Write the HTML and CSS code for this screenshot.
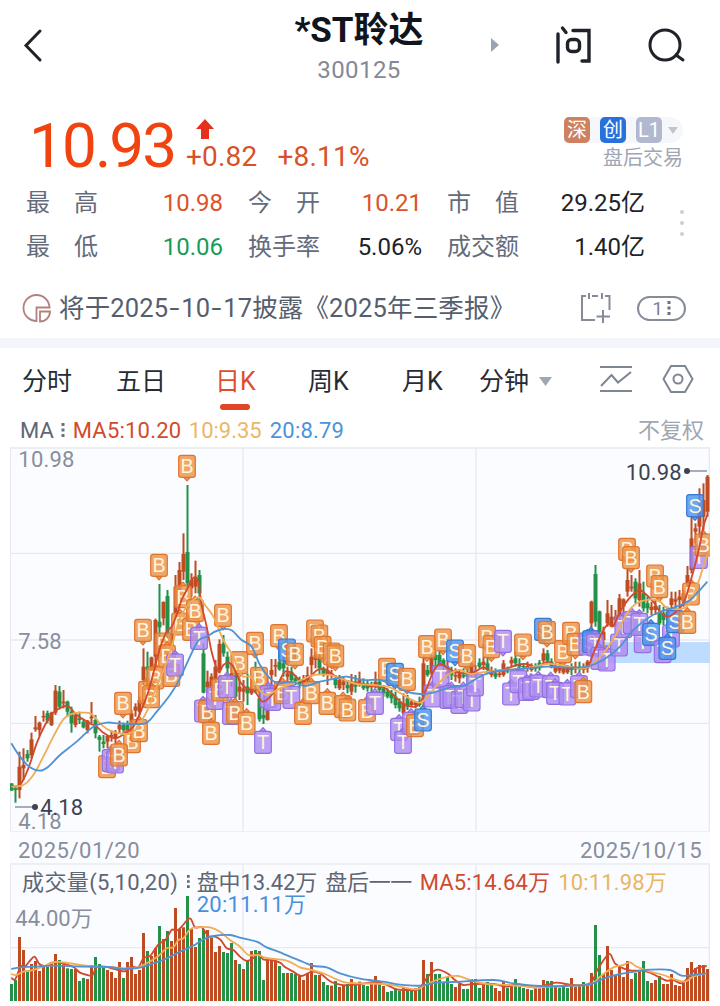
FILE: index.html
```html
<!DOCTYPE html>
<html lang="zh-CN">
<head>
  <meta charset="UTF-8" />
  <meta name="viewport" content="width=device-width, initial-scale=1.0"/>
  <title>*ST聆达 300125</title>
  <link rel="stylesheet" href="styles.css">
</head>
<body>

  <header class="header">
    <svg class="back" width="24" height="36" viewBox="0 0 24 36"><path d="M19 4L5 18.500L19 33"/></svg>
    <div class="title">
      <h1>*ST聆达</h1>
      <span>300125</span>
    </div>
    <svg class="next" width="8" height="14" viewBox="0 0 8 14"><path d="M0 0L8 7L0 14Z"/></svg>
    <svg class="ask" width="38" height="40" viewBox="0 0 38 40">
      <path d="M3 9V37M7.500 3L11 7.500M18 5.500H34V36H27"/>
      <rect x="12.500" y="14.500" width="12" height="12" rx="4"/>
    </svg>
    <svg class="search" width="40" height="40" viewBox="0 0 40 40"><circle cx="17" cy="20" r="15"/><path d="M28 30L35 35"/></svg>
  </header>

  <section class="quote">
    <div class="price">10.93</div>
    <div class="change">
      <svg width="18" height="20" viewBox="0 0 18 20"><path d="M9 0L18 10H13V20H5V10H0Z"/></svg>
      <div><span>+0.82</span><span>+8.11%</span></div>
    </div>
    <div class="tags">
      <div class="tag-row">
        <b class="tag sz">深</b><b class="tag cy">创</b><b class="tag lv">L1</b>
        <svg width="10" height="7" viewBox="0 0 10 7"><path d="M0 0H10L5 7Z"/></svg>
      </div>
      <span>盘后交易</span>
    </div>
  </section>

  <section class="stats">
    <div class="stats-grid">
      <span>最　高</span><b class="up">10.98</b>
      <span>今　开</span><b class="up">10.21</b>
      <span>市　值</span><b>29.25亿</b>
      <span>最　低</span><b class="down">10.06</b>
      <span>换手率</span><b>5.06%</b>
      <span>成交额</span><b>1.40亿</b>
    </div>
    <div class="more"><i></i><i></i><i></i></div>
  </section>

  <section class="notice">
    <svg class="pie" width="30" height="30" viewBox="0 0 30 30">
      <path d="M14.500 28A13 13 0 1 1 27.500 14.500H14.500Z"/>
      <path d="M18 18.500H28A10 10 0 0 1 18 28.500Z"/>
    </svg>
    <p>将于2025<em>-</em>10<em>-</em>17披露《2025年三季报》</p>
    <svg class="calendar" width="30" height="32" viewBox="0 0 30 32">
      <path d="M5 4H1V28H14M11 4H17M24 4H28.500V18M8 1V7M21 1V7M22 18V31M15.500 24.500H29"/>
    </svg>
    <div class="pager"><span>1</span><svg width="4" height="14" viewBox="0 0 4 14"><path d="M2 0V14"/></svg></div>
  </section>

  <nav class="tabs">
    <span>分时</span>
    <span>五日</span>
    <span class="active">日K</span>
    <span>周K</span>
    <span>月K</span>
    <span>分钟 <svg width="13" height="9" viewBox="0 0 13 9"><path d="M0 0H13L6.500 9Z"/></svg></span>
    <svg class="tool" width="34" height="28" viewBox="0 0 34 28"><path d="M1 2H33M1 26H33M2 21L12.500 10L19 17.500L32 7"/></svg>
    <svg class="tool" width="32" height="30" viewBox="0 0 32 30"><path d="M9 2H23L30.500 15L23 28H9L1.500 15Z"/><circle cx="16" cy="15" r="4.500"/></svg>
  </nav>

  <div class="ma-row">
    <span class="ma-name">MA</span>
    <svg class="dots" width="4" height="15" viewBox="0 0 4 15"><path d="M2 0V15"/></svg>
    <span class="ma5">MA5:10.20</span>
    <span class="ma10">10:9.35</span>
    <span class="ma20">20:8.79</span>
    <span class="adjust">不复权</span>
  </div>

  <main class="charts">
    <!-- three chart units to one pixel -->
    <svg id="kline" class="kline" width="700" height="384" viewBox="30 21 2100 1152">
      <path class="grid" d="M30 24H2130M30 340H2130M30 600H2130M30 850H2130M31 21V1173M729 21V1173M1428 21V1173M2128 21V1173"/>
      <rect class="band" x="1790" y="606" width="340" height="63"/>
      <text class="axis" x="55" y="80" textLength="168">10.98</text>
      <text class="axis" x="55" y="626" textLength="130">7.58</text>
      <text class="axis" x="55" y="1166" textLength="130">4.18</text>
    </svg>
    <div class="dates"><span>2025/01/20</span><span>2025/10/15</span></div>
    <svg id="volume" class="volume" width="700" height="137" viewBox="30 105 2100 411">
      <path class="grid" d="M30 353H2130M31 105V513M729 105V513M1428 105V513M2128 105V513"/>
    </svg>
  </main>

  <script src="script.js"></script>
</body>
</html>
```
FILE: styles.css
```css
* {
  box-sizing: border-box;
}

body {
  margin: 0;
  width: 720px;
  height: 1006px;
  overflow: hidden;
  background: #fff;
  color: #1d2027;
  font-family: Roboto, "Noto Sans CJK SC", sans-serif;
}

svg {
  display: block;
  fill: none;
}

h1, p {
  margin: 0;
}

b, em, i {
  font-weight: 400;
  font-style: normal;
}

/* header */
.header {
  display: grid;
  grid-template-columns: 259px 200px 90px 92px 40px;
  align-items: center;
  height: 90px;
}

.header svg {
  stroke: #1f2329;
  stroke-width: 3;
  stroke-linecap: round;
}

.header .back {
  margin-left: 21px;
}

.title {
  display: flex;
  flex-direction: column;
  align-items: center;
  height: 90px;
  padding-top: 8px;
}

.title h1 {
  font-size: 35px;
  line-height: 46px;
  font-weight: 700;
  white-space: nowrap;
  color: #10141c;
}

.title span {
  font-size: 24px;
  line-height: 32px;
  letter-spacing: 0.4px;
  color: #838998;
}

.header .next {
  margin-left: 32px;
  fill: #9ca3b2;
  stroke: none;
}

.header .ask {
  margin-left: 6px;
  stroke-width: 3.4;
}

.header .search {
  margin-left: 7px;
}

/* price block */
.quote {
  display: flex;
  height: 91px;
  padding: 21px 37px 0 29px;
}

.price {
  width: 157px;
  font-size: 62px;
  line-height: 70px;
  letter-spacing: -1.9px;
  color: #f0430f;
}

.change {
  flex: 1;
  padding-top: 8px;
  font-size: 28px;
  color: #d9512a;
}

.change svg {
  margin-left: 10px;
  fill: #e6301c;
}

.change div {
  display: flex;
  gap: 20px;
  line-height: 36px;
  letter-spacing: 0.2px;
}

.tags {
  display: flex;
  flex-direction: column;
  align-items: flex-end;
  padding-top: 6px;
  font-size: 20px;
  color: #a0a6b4;
}

.tags > span {
  line-height: 31px;
}

.tag-row {
  display: flex;
  align-items: center;
  gap: 10px;
  padding-right: 5px;
  border-radius: 13px;
  background: #f6f7fa;
}

.tag-row svg {
  margin-left: -4px;
  fill: #c3c5cb;
}

.tag {
  width: 26px;
  height: 26px;
  border-radius: 5px;
  color: #fff;
  font-size: 20px;
  line-height: 26px;
  text-align: center;
}

.sz { background: #cd8160; }
.cy { background: #2870dc; }
.lv { background: #b3b8d1; }

/* quote figures */
.stats {
  display: flex;
  height: 95px;
  padding-left: 26px;
}

.stats-grid {
  display: grid;
  grid-template-columns: 72px 125px 97px 102px 97px 126px;
  grid-template-rows: 44px 44px;
  line-height: 44px;
  font-size: 24px;
  color: #646b7b;
}

.stats-grid b {
  text-align: right;
  color: #202329;
  white-space: nowrap;
}

.stats-grid span {
  text-align: right;
}

.stats-grid .up { color: #dc5229; }
.stats-grid .down { color: #169c5b; }

.more {
  display: flex;
  flex-direction: column;
  gap: 7px;
  padding: 29px 0 0 35px;
}

.more i {
  width: 4px;
  height: 4px;
  border-radius: 50%;
  background: #cdced2;
}

/* report notice */
.notice {
  display: flex;
  align-items: center;
  height: 72px;
  padding: 2px 34px 0 22px;
  border-bottom: 10px solid #f4f5fa;
}

.pie {
  stroke: #b3817c;
  stroke-width: 1.8;
}

.notice p {
  flex: 1;
  padding-left: 7px;
  font-size: 25.5px;
  line-height: 32px;
  letter-spacing: 0.15px;
  color: #565e6e;
  white-space: nowrap;
}

.notice em {
  display: inline-block;
  width: 13px;
  text-align: center;
  transform: scaleX(1.4);
}

.calendar {
  margin-right: 26px;
  stroke: #858c98;
  stroke-width: 2;
}

.pager {
  display: flex;
  align-items: center;
  justify-content: center;
  gap: 4px;
  width: 49px;
  height: 25px;
  border: 2px solid #858c98;
  border-radius: 13px;
  font-size: 19px;
  color: #7b8290;
}

.pager svg, .dots {
  stroke: #697080;
  stroke-width: 3;
  stroke-dasharray: 3 2.500;
}

/* period tabs */
.tabs {
  display: grid;
  grid-template-columns: 94px 99px 93px 94px 77px 120px 63px 32px;
  align-items: center;
  height: 62px;
  padding-left: 22px;
  font-size: 25px;
  color: #262b35;
}

.tabs span {
  display: flex;
  align-items: center;
  gap: 10px;
}

.tabs span svg {
  fill: #a0a6b4;
  margin-top: 4px;
}

.tabs .active {
  color: #dd4d2c;
  position: relative;
}

.tabs .active::after {
  content: "";
  position: absolute;
  left: 5px;
  top: 43px;
  width: 30px;
  height: 6px;
  border-radius: 3px;
  background: #e24524;
}

.tool {
  stroke: #7f8693;
  stroke-width: 2;
}

/* moving average legend */
.ma-row {
  display: flex;
  align-items: center;
  height: 37px;
  padding: 4px 16px 0 20px;
  font-size: 22px;
  color: #5f6675;
}

.dots {
  margin: 0 8px 0 7px;
}

.ma-row .ma5 {
  width: 116px;
  color: #d14b2c;
  letter-spacing: 0.2px;
}

.ma-row .ma10 {
  width: 81px;
  color: #ebb766;
}

.ma-row .ma20 {
  color: #4b93db;
  letter-spacing: 0.2px;
}

.adjust {
  margin-left: auto;
  line-height: 26px;
  color: #a0a6b2;
}

/* charts */
.charts {
  width: 700px;
  margin-left: 10px;
  background: #fbfcff;
}

.grid {
  stroke: #e7e9ee;
  stroke-width: 4;
}

.band { fill: #bddcff; }

.charts text {
  font-size: 66px;
  stroke: none;
}

.axis { fill: #888e9d; }
.note { fill: #3c4350; }
.legend { fill: #5e6573; }
.t5 { fill: #cf4b2e; }
.t10 { fill: #e9b562; }
.t20 { fill: #4990dc; }

.dates {
  display: flex;
  justify-content: space-between;
  align-items: center;
  height: 34px;
  padding: 5px 8px 0;
  border: solid #edeff3;
  border-width: 1px 0 2px;
  font-size: 22px;
  letter-spacing: 0.5px;
  color: #888e9d;
}

.rise { fill: #bd4c22; }
.fall { fill: #259048; }

.line {
  stroke-width: 5.5;
  stroke-linejoin: round;
}

.l5 { stroke: #d3492c; }
.l10 { stroke: #f0ad58; }
.l20 { stroke: #5192d2; }

.mark rect, .mark path {
  stroke-width: 3.5;
  fill-opacity: 0.82;
}

.charts .mark text {
  font-family: "Liberation Sans", sans-serif;
  font-size: 59px;
  fill: #fff4dc;
  text-anchor: middle;
}

.B { fill: #ec9247; stroke: #e0752f; }
.T { fill: #ad8cf2; stroke: #9270df; }
.S { fill: #4a94f0; stroke: #3878d0; }
```
FILE: script.js
```js
const NS = "http://www.w3.org/2000/svg";
const kline = document.getElementById("kline");
const volume = document.getElementById("volume");

function add(parent, tag, attrs, text) {
  const el = document.createElementNS(NS, tag);
  for (const key in attrs) el.setAttribute(key, attrs[key]);
  if (text) el.textContent = text;
  parent.appendChild(el);
  return el;
}

// r = rise, g = fall; one letter per trading day, ten days to a group
const klineDirs = (
  "ggrrgrrrrg rrgrggrggr rgggrrrrgg rrrrgrrgrg rrrrgrrggr rrrggrgrrg " +
  "rgggrrrggr gggrrrrggr rgrrgrgrgg grggggggrg rrgrgrgggr grrggrrgrg " +
  "rgrrgrgggr rggrggrrrr grgrrrggrr rrrrrrgrgg rrggrrrrrr rrrrr"
).replaceAll(" ", "");

// high, body top, body bottom, low
const candles = [
  [1030,1030,1052,1052],[1040,1045,1050,1088],[935,980,1050,1075],[925,975,985,1020],[930,942,955,965],
  [878,898,945,955],[828,862,868,875],[845,848,870,888],[812,828,832,845],[812,820,842,850],
  [815,818,855,858],[735,752,818,825],[738,755,800,808],[750,785,790,805],[782,785,815,830],
  [800,815,850,878],[822,825,855,862],[815,835,840,852],[840,845,862,865],[840,842,870,880],
  [786,830,835,850],[825,840,880,895],[885,890,900,935],[885,905,912,925],[885,888,905,925],
  [870,885,890,905],[870,880,895,915],[842,855,868,880],[848,855,870,880],[842,855,872,880],
  [810,820,850,860],[790,800,812,830],[770,780,815,825],[625,680,720,800],[635,680,690,740],
  [650,652,690,720],[536,540,650,690],[432,545,562,600],[484,486,535,556],[450,468,580,610],
  [560,580,620,640],[405,440,520,580],[366,390,450,500],[280,342,395,420],[135,336,430,440],
  [400,420,445,470],[362,410,440,460],[390,405,460,500],[610,640,758,760],[692,725,742,760],
  [700,710,740,760],[660,680,720,750],[598,612,690,700],[585,610,640,650],[635,650,685,720],
  [670,700,720,740],[690,705,770,780],[715,740,755,780],[720,745,755,785],[700,740,760,795],
  [710,745,760,765],[665,700,740,760],[750,775,838,845],[800,825,835,852],[710,780,840,842],
  [657,690,705,740],[657,675,680,710],[630,665,688,692],[650,670,685,710],[680,700,710,730],
  [680,695,720,730],[705,715,725,735],[710,722,732,745],[705,720,730,740],[680,705,720,730],
  [625,650,675,710],[635,645,660,685],[640,650,685,705],[680,685,705,710],[670,690,705,735],
  [690,700,705,715],[705,715,735,745],[705,720,745,750],[710,725,735,750],[720,735,745,760],
  [702,730,755,765],[705,725,740,758],[695,720,730,740],[715,730,745,750],[720,730,745,755],
  [725,735,740,760],[695,725,738,745],[720,725,750,760],[735,745,760,770],[745,755,770,775],
  [750,760,775,790],[755,770,795,805],[775,785,805,815],[760,790,820,825],[765,775,800,810],
  [780,785,795,800],[785,788,795,805],[770,785,795,800],[650,670,770,800],[675,690,705,710],
  [645,655,700,705],[635,645,660,690],[630,645,675,680],[655,660,675,690],[660,680,705,715],
  [680,695,705,720],[685,705,710,725],[690,700,715,730],[685,705,710,715],[685,700,710,725],
  [650,670,705,710],[675,700,710,720],[655,668,680,685],[650,665,675,690],[650,670,690,700],
  [680,690,705,712],[685,700,710,717],[690,700,705,712],[660,670,705,710],[680,685,695,700],
  [650,660,670,680],[635,655,670,680],[655,672,680,690],[670,678,682,690],[665,678,685,695],
  [670,680,690,695],[670,678,686,695],[660,668,685,692],[625,640,662,675],[630,640,662,670],
  [655,665,680,685],[670,680,695,700],[670,680,692,700],[675,685,698,703],[675,685,697,702],
  [670,678,690,705],[665,680,688,700],[665,680,685,698],[670,685,690,700],[660,665,685,698],
  [482,485,550,600],[375,402,545,560],[512,514,575,600],[560,575,600,620],[480,520,550,560],
  [495,530,560,560],[510,530,540,560],[462,475,530,540],[475,478,500,520],[385,420,455,470],
  [405,440,445,455],[415,425,475,490],[390,430,480,500],[425,460,505,515],[470,490,505,520],
  [485,500,510,525],[480,498,510,525],[495,520,550,555],[500,520,540,555],[500,515,530,555],
  [455,475,495,510],[455,478,485,520],[450,470,480,510],[450,460,485,500],[378,405,430,480],
  [230,295,390,400],[250,265,275,310],[145,200,260,300],[130,180,230,270],[105,110,215,230]
];

candles.forEach(([high, top, bottom, low], i) => {
  const x = 34.5 + i * 12;
  const cls = klineDirs[i] === "g" ? "fall" : "rise";
  add(kline, "rect", { x: x - 3, y: high, width: 6, height: low - high, class: cls });
  add(kline, "rect", { x: x - 6, y: top, width: 12, height: bottom - top, class: cls });
});

// letter, centre x, centre y, pointer side (d = below, u = above)
const marks = `B 561 79 d;B 477 376 d;B 429 571 d;B 490 612 d;B 549 470 u;B 540 552 u;B 573 568 u;B 585 512 u;
T 597 595 u;B 669 526 d;B 369 790 d;B 441 757 u;B 466 714 u;B 514 706 u;B 501 648 u;T 525 675 u;B 453 770 u;
B 396 905 u;B 417 872 u;B 321 980 u;T 332 962 u;T 345 966 u;B 357 945 u;T 609 813 u;B 621 815 u;B 633 880 u;
T 645 775 u;B 660 750 u;T 681 740 u;T 693 820 u;B 705 818 u;B 718 668 d;B 740 850 u;B 765 610 d;B 777 715 d;
T 789 907 u;T 805 770 u;T 817 778 u;B 837 587 d;S 861 630 d;B 885 643 d;B 848 758 u;T 874 772 u;B 909 820 u;
B 934 758 u;B 945 573 d;B 958 588 d;B 968 622 d;B 995 642 d;B 1006 648 d;B 982 790 u;B 1029 800 u;B 1042 810 u;
B 1101 812 u;T 1125 790 u;B 1161 688 d;S 1185 703 d;B 1221 718 d;T 1197 868 u;T 1209 907 u;T 1233 850 u;
B 1245 857 u;S 1269 840 u;B 1281 620 d;B 1329 600 d;S 1365 633 d;B 1401 647 d;T 1297 768 u;T 1322 710 u;
T 1345 772 u;T 1354 770 u;T 1378 787 u;T 1390 770 u;T 1415 780 u;T 1425 735 u;B 1461 590 d;B 1474 620 d;
T 1509 604 d;T 1533 762 u;T 1555 725 u;T 1580 748 u;T 1593 745 u;T 1615 738 u;T 1652 740 u;T 1665 760 u;
T 1702 762 u;T 1737 740 u;B 1750 755 u;S 1629 568 d;B 1569 615 d;B 1641 577 d;B 1689 635 d;B 1713 580 d;
B 1726 613 d;T 1762 612 u;S 1773 605 u;T 1785 615 u;T 1798 655 u;T 1820 660 u;T 1857 615 u;T 1870 560 u;
T 1895 548 u;T 1928 605 u;T 1918 553 u;S 1953 583 u;T 1988 635 u;T 2013 588 u;S 2002 625 u;S 2025 545 u;
B 2073 462 u;B 2062 547 u;T 2097 352 u;B 2110 315 u;S 2085 197 d;B 1881 328 d;B 1893 353 d;B 1965 408 d;B 1978 440 d`;

marks.split(";").forEach(item => {
  const [letter, px, py, side] = item.trim().split(" ");
  const x = +px, y = +py;
  const g = add(kline, "g", { class: "mark" });
  const tip = side === "d"
    ? `M${x - 9} ${y + 34}L${x} ${y + 44}L${x + 9} ${y + 34}Z`
    : `M${x - 9} ${y - 34}L${x} ${y - 44}L${x + 9} ${y - 34}Z`;
  add(g, "path", { d: tip, class: letter });
  add(g, "rect", { x: x - 25, y: y - 33, width: 50, height: 66, rx: 8, class: letter });
  add(g, "text", { x: x, y: y + 21 }, letter);
});

// smooth curve through a flat list of x,y values
function curve(parent, cls, list) {
  const p = [];
  for (let i = 0; i < list.length; i += 2) p.push([list[i], list[i + 1]]);
  let d = `M${p[0]}`;
  for (let i = 0; i < p.length - 1; i++) {
    const a = p[i - 1] || p[i], b = p[i], c = p[i + 1], e = p[i + 2] || c;
    d += `C${b[0] + (c[0] - a[0]) / 6} ${b[1] + (c[1] - a[1]) / 6} ${c[0] - (e[0] - b[0]) / 6} ${c[1] - (e[1] - b[1]) / 6} ${c}`;
  }
  add(parent, "path", { d: d, class: "line " + cls });
}

curve(kline, "l5", [34,1038,60,1035,85,985,110,910,135,855,160,818,185,802,205,798,225,820,245,835,270,850,290,860,
  310,878,345,895,375,880,400,860,420,820,445,755,460,700,480,625,500,575,515,560,530,525,545,480,560,450,572,425,
  584,412,596,430,604,490,620,560,636,640,655,695,670,675,685,668,700,680,720,725,740,745,765,755,788,785,815,765,
  835,730,855,695,880,702,905,725,930,710,952,690,975,688,1000,705,1030,720,1065,728,1110,738,1150,742,1175,760,
  1210,792,1245,800,1262,785,1280,745,1300,695,1318,672,1340,682,1365,695,1390,700,1420,698,1450,682,1475,695,
  1510,690,1550,675,1580,672,1610,682,1645,665,1675,682,1720,683,1760,683,1780,640,1805,580,1825,552,1840,558,
  1860,515,1885,478,1905,458,1920,450,1940,465,1960,485,1980,515,2000,530,2020,522,2050,490,2070,430,2095,335,
  2110,260,2122,225]);
curve(kline, "l10", [34,1040,70,1035,100,1005,130,950,160,890,190,838,220,820,245,818,275,822,300,850,330,872,370,882,
  400,875,420,850,445,805,470,740,495,680,515,620,540,535,560,500,580,480,598,472,615,495,640,530,670,600,700,650,
  715,690,730,710,752,710,775,745,800,765,840,745,880,730,915,715,940,705,990,705,1030,718,1070,732,1120,735,
  1170,742,1210,765,1260,788,1290,760,1330,715,1360,695,1380,690,1410,702,1440,698,1510,690,1580,685,1640,672,
  1680,675,1720,682,1760,683,1810,640,1850,580,1880,522,1910,490,1955,478,1980,485,2005,505,2060,500,2090,440,
  2110,380,2122,345]);
curve(kline, "l20", [34,910,60,950,90,982,120,992,145,980,180,945,230,905,280,860,320,848,350,850,400,852,440,848,
  470,815,510,765,540,715,570,650,595,602,620,590,645,575,670,567,695,571,725,600,755,620,780,675,810,715,835,730,
  875,725,915,738,960,725,1010,715,1040,710,1090,720,1140,720,1180,735,1220,755,1260,762,1300,758,1350,742,
  1390,738,1420,722,1450,705,1490,693,1560,687,1640,680,1710,683,1760,680,1810,660,1860,620,1900,570,1950,530,
  1990,512,2030,500,2070,480,2095,455,2122,425]);

// marks for the lowest and the highest price
add(kline, "path", { d: "M45 1101H105M2061 93H2121", stroke: "#8b93a3", "stroke-width": 5 });
add(kline, "circle", { cx: 105, cy: 1101, r: 9, class: "note" });
add(kline, "circle", { cx: 2061, cy: 93, r: 9, class: "note" });
add(kline, "text", { x: 121, y: 1126, textLength: 128, class: "note" }, "4.18");
add(kline, "text", { x: 1877, y: 119, textLength: 168, class: "note" }, "10.98");

const volumeDirs = (
  "ggrrgrrrrg rrgrggrggr rgggrrrrgr rrrrgrrgrg rrrrgrrggr rrrgggrgrg " +
  "rgggrrrggr ggrrrrgrgg rgrrgrgrgg rrgrggggrg grgrgrgggg grrggrggrg " +
  "grrrgrgggr grrrggrggg rrrgrrggrr rrrrrrgrgg rrgrrrrrrr rrrrr"
).replaceAll(" ", "");
const volumeTops = [
  462,450,321,360,420,402,393,423,408,410,400,372,390,403,415,417,417,453,444,447,405,381,402,408,420,
  426,444,396,444,396,381,432,420,309,363,378,354,288,327,303,333,234,297,292,198,297,351,324,297,300,
  324,366,348,366,369,339,390,402,417,390,363,360,363,450,390,390,393,408,429,429,429,432,435,450,429,
  399,435,435,456,465,467,453,471,466,462,447,462,455,465,468,459,438,462,468,486,483,475,482,471,478,
  480,475,470,390,432,396,432,432,456,441,462,471,460,477,477,447,447,474,462,456,459,474,483,453,474,
  465,447,471,474,477,480,475,475,450,453,453,470,473,470,474,444,471,465,456,465,429,285,375,432,348,
  420,435,411,441,393,447,429,420,393,453,459,450,438,462,462,432,465,468,456,414,396,414,405,405,417
];

volumeTops.forEach((top, i) => {
  add(volume, "rect", {
    x: 30 + i * 12, y: top, width: 9, height: 513 - top,
    class: volumeDirs[i] === "g" ? "fall" : "rise"
  });
});

curve(volume, "l5", [34,444,46,447,62,410,75,410,90,392,104,380,118,402,135,408,155,398,178,398,205,405,222,412,
  240,428,262,435,278,435,290,412,315,410,335,415,355,420,375,424,394,410,415,412,430,385,450,378,462,362,478,340,
  495,332,515,300,530,302,545,290,560,272,572,266,585,292,605,292,625,318,645,320,662,330,680,355,700,360,720,380,
  740,393,760,384,775,370,790,388,815,390,840,398,856,412,880,425,905,438,935,425,960,430,985,450,1005,460,
  1040,466,1080,462,1130,456,1160,465,1190,478,1230,480,1255,478,1280,445,1298,425,1315,419,1345,432,1365,450,
  1390,465,1420,462,1480,462,1520,470,1550,462,1600,472,1640,465,1670,458,1720,465,1770,460,1792,420,1820,378,
  1832,374,1845,400,1870,415,1895,422,1925,422,1950,428,1970,438,2000,452,2020,450,2045,460,2065,442,2090,415,2120,408]);
curve(volume, "l10", [34,432,50,435,70,425,100,420,140,405,165,396,200,398,240,405,290,410,340,412,400,415,430,405,
  470,382,500,355,520,352,535,330,550,325,570,298,590,292,630,292,660,305,690,330,720,350,745,375,775,375,800,384,
  860,392,900,412,935,420,975,432,1010,448,1040,458,1080,460,1150,462,1200,470,1250,478,1275,465,1310,450,
  1345,440,1375,438,1410,450,1460,462,1530,465,1610,472,1680,468,1770,463,1800,440,1840,412,1870,405,1890,397,
  1910,410,1950,425,1990,435,2020,447,2055,455,2080,440,2120,430]);
curve(volume, "l20", [34,417,60,412,100,410,160,407,250,410,330,411,370,417,420,413,460,400,500,385,540,365,580,347,
  610,328,640,318,690,315,720,323,770,335,800,352,835,365,870,380,910,396,940,408,980,412,1020,430,1080,446,
  1150,455,1200,464,1260,467,1310,458,1360,456,1480,450,1540,460,1620,468,1700,468,1770,463,1810,446,1860,432,
  1910,424,1950,419,2010,420,2045,437,2080,435,2120,430]);

[
  ["legend", 66, 179, 468, "成交量(5,10,20)"],
  ["legend", 590, 179, 362, "盘中13.42万"],
  ["legend", 976, 179, 261, "盘后一一"],
  ["t5", 1259, 179, 391, "MA5:14.64万"],
  ["t10", 1675, 179, 325, "10:11.98万"],
  ["t20", 590, 245, 328, "20:11.11万"],
  ["axis", 46, 287, 232, "44.00万"]
].forEach(([cls, x, y, len, text]) => add(volume, "text", { x, y, textLength: len, class: cls }, text));
add(volume, "path", { d: "M565 135V174", stroke: "#5e6573", "stroke-width": 8, "stroke-dasharray": "8 7.5" });
```
